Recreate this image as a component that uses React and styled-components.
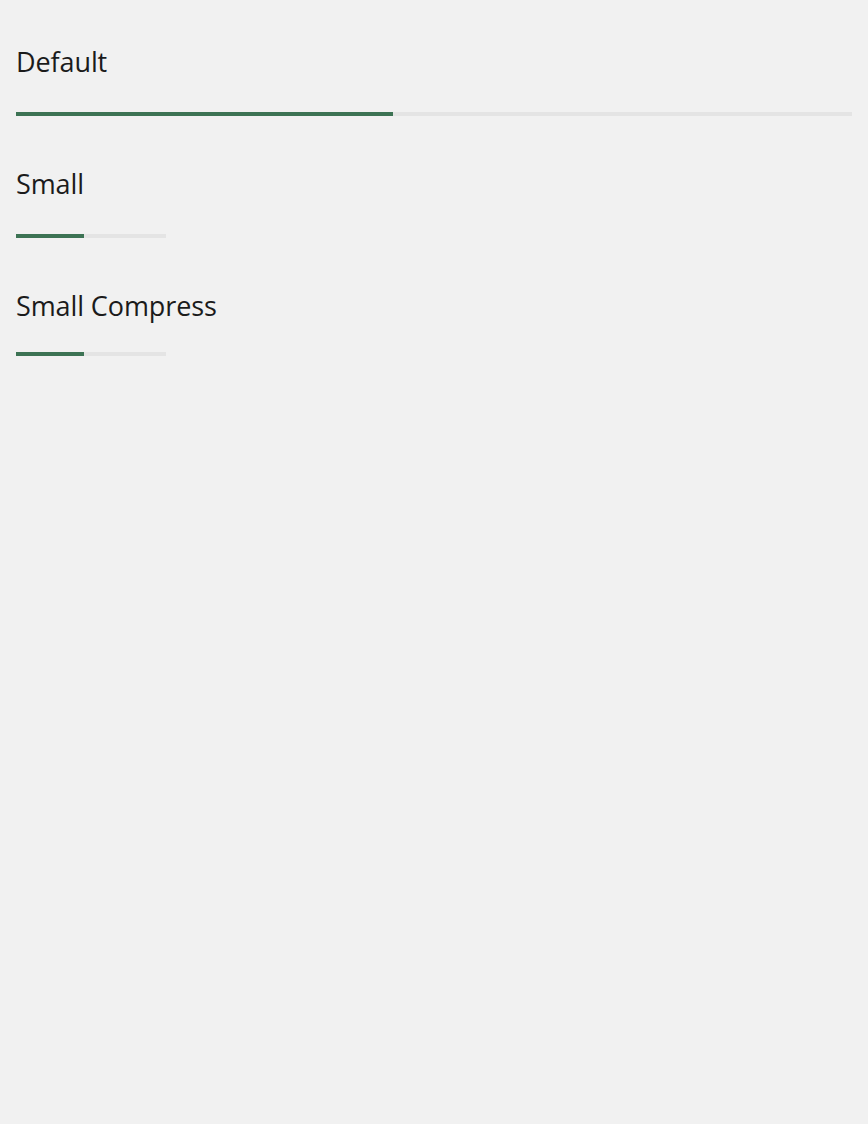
import React from "react";
import styled, { createGlobalStyle } from "styled-components";

const GlobalStyle = createGlobalStyle`
  body {
    margin: 0;
    background: #f1f1f1;
    font-family: "Open Sans", "Liberation Sans", sans-serif;
  }
`;

const Page = styled.div`
  padding: 0 16px;
  display: flex;
  flex-direction: column;
`;

const Section = styled.section`
  display: flex;
  flex-direction: column;
  padding-top: ${(p) => p.$top}px;
`;

const Title = styled.h2`
  margin: 0;
  font-size: 27px;
  line-height: 36px;
  font-weight: 400;
  color: #1b1b1b;
  letter-spacing: -0.1px;
`;

const Track = styled.div`
  margin-top: ${(p) => p.$gap}px;
  height: 4px;
  width: ${(p) => (p.$small ? "150px" : "100%")};
  background: #e4e4e4;
  display: flex;
`;

const Fill = styled.div`
  height: 100%;
  background: #3d7354;
`;

const Progress = ({ value, small, gap }) => (
  <Track $small={small} $gap={gap}>
    <Fill style={{ width: `${value}%` }} />
  </Track>
);

export default function App() {
  return (
    <>
      <GlobalStyle />
      <Page>
        <Section $top={44}>
          <Title>Default</Title>
          <Progress value={45.1} gap={32} />
        </Section>
        <Section $top={50}>
          <Title>Small</Title>
          <Progress value={45.3} small gap={32} />
        </Section>
        <Section $top={50}>
          <Title>Small Compress</Title>
          <Progress value={45.3} small gap={28} />
        </Section>
      </Page>
    </>
  );
}
